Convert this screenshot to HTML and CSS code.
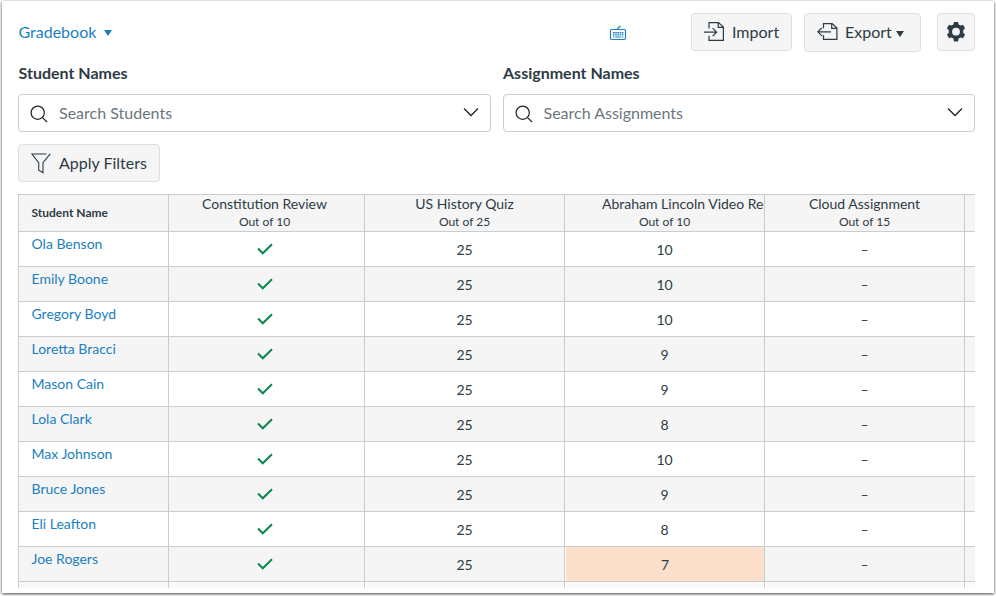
FILE: index.html
```html
<!DOCTYPE html>
<html lang="en">
<head>
  <meta charset="UTF-8">
  <title>Gradebook</title>
  <meta name="viewport" content="width=device-width, initial-scale=1.0">
  <link rel="stylesheet" href="styles.css">
</head>
<body>
  <div class="page">
    <header class="toolbar">
      <a class="gradebook-menu">Gradebook <span class="caret"></span></a>
      <svg class="keyboard" width="18" height="16" viewBox="0 0 18 16" fill="none" stroke="#1a7fc1">
        <rect x="1.500" y="4.500" width="15" height="10" rx="1.200" stroke-width="1.100"/>
        <path d="M8.800 4.500V3.200L11.500 1" stroke-width="1.200"/>
        <path d="M4 7.700h10.500M4 9.900h10.500" stroke-width="1.400" stroke-dasharray="1.600 .6"/>
        <path d="M4 12h1.500M6.300 12h5.500M12.800 12h1.500" stroke-width="1.200"/>
      </svg>
      <button class="btn import">
        <svg width="22" height="22" viewBox="0 0 22 22" fill="none" stroke="#2d3b45" stroke-width="1.2">
          <path d="M5 7.500V1.600h9.500L19.400 6v13.400H5v-4.600M14.200 1.600V6.400h5.200M0 11.200h12.300M8.600 7.200l4 4-4 4"/>
        </svg>
        <span>Import</span>
      </button>
      <button class="btn export">
        <svg width="22" height="20" viewBox="0 0 22 20" fill="none" stroke="#2d3b45" stroke-width="1.2">
          <path d="M6.500 6.200V1.600h8.700L19.900 6v11.400H6.500v-4.300M14.700 1.600V6.400h5.200M.9 9.800h13M4.900 5.800l-4 4 4 4"/>
        </svg>
        <span>Export</span> <span class="caret"></span>
      </button>
      <button class="btn settings">
        <svg width="20" height="20" viewBox="0 0 20 20" fill="#2d3b45">
          <path fill-rule="evenodd" d="M7.900 0h4.200l.5 2.500 1.900 1.100 2.500-.9 2.100 3.700-1.900 1.700v2.800l1.900 1.700-2.100 3.700-2.500-.9-1.900 1.100-.5 2.900H7.900l-.5-2.900-1.900-1.100-2.500.9L.9 12.600l1.900-1.700V8.100L.9 6.400 3 2.700l2.500.9 1.900-1.100zM10 5.800a3.900 3.900 0 1 0 0 7.800 3.900 3.900 0 0 0 0-7.800z"/>
        </svg>
      </button>
    </header>

    <div class="search">
      <div class="field">
        <label>Student Names</label>
        <div class="input">
          <svg width="18" height="18" viewBox="0 0 18 18" fill="none" stroke="#222" stroke-width="1.2">
            <circle cx="7.700" cy="7.700" r="6.600"/><path d="M12.300 12.300L17 17"/>
          </svg>
          <span>Search Students</span>
          <svg class="arrow" width="16" height="10" viewBox="0 0 16 10" fill="none" stroke="#222" stroke-width="1.3">
            <path d="M1 1.500l7 7 7-7"/>
          </svg>
        </div>
      </div>
      <div class="field">
        <label>Assignment Names</label>
        <div class="input">
          <svg width="18" height="18" viewBox="0 0 18 18" fill="none" stroke="#222" stroke-width="1.2">
            <circle cx="7.700" cy="7.700" r="6.600"/><path d="M12.300 12.300L17 17"/>
          </svg>
          <span>Search Assignments</span>
          <svg class="arrow" width="16" height="10" viewBox="0 0 16 10" fill="none" stroke="#222" stroke-width="1.3">
            <path d="M1 1.500l7 7 7-7"/>
          </svg>
        </div>
      </div>
    </div>

    <button class="btn filters">
      <svg width="20" height="21" viewBox="0 0 20 21" fill="none" stroke="#2d3b45" stroke-width="1.1">
        <path d="M15.500 1H.9l6.800 8.600v7.700l4.300 2.400V9.600L19.300.9"/>
      </svg>
      <span>Apply Filters</span>
    </button>

    <div class="grid">
      <table>
        <colgroup>
          <col class="col-name"><col class="col-first"><col class="col"><col class="col"><col class="col"><col class="col-rest">
        </colgroup>
        <thead>
          <tr>
            <th class="name">Student Name</th>
            <th class="first">Constitution Review<small>Out of 10</small></th>
            <th>US History Quiz<small>Out of 25</small></th>
            <th class="long"><div>Abraham Lincoln Video Re</div><small>Out of 10</small></th>
            <th>Cloud Assignment<small>Out of 15</small></th>
            <th></th>
          </tr>
        </thead>
        <tbody id="rows"></tbody>
      </table>
    </div>
  </div>

  <script>
  const students = [
    ["Ola Benson", 10],
    ["Emily Boone", 10],
    ["Gregory Boyd", 10],
    ["Loretta Bracci", 9],
    ["Mason Cain", 9],
    ["Lola Clark", 8],
    ["Max Johnson", 10],
    ["Bruce Jones", 9],
    ["Eli Leafton", 8],
    ["Joe Rogers", 7]
  ];
  const check = '<svg width="16" height="12" viewBox="0 0 16 12" fill="none" stroke="#0b874b" stroke-width="2"><path d="M1 5.500l4.800 4.800L15 1.200"/></svg>';
  const tbody = document.getElementById("rows");

  students.forEach(([name, score]) => {
    const tr = document.createElement("tr");
    const late = score === 7 ? ' class="late"' : "";
    tr.innerHTML = `<td class="name"><a>${name}</a></td><td class="first">${check}</td><td>25</td><td${late}>${score}</td><td>–</td><td></td>`;
    tbody.appendChild(tr);
  });

  // next row, cut off by the bottom of the grid
  const last = document.createElement("tr");
  last.className = "cut";
  last.innerHTML = "<td></td>".repeat(6);
  tbody.appendChild(last);
  </script>
</body>
</html>
```

FILE: styles.css
```css
* {
  box-sizing: border-box;
}
body {
  margin: 0;
  height: 596px;
  padding: 1px 2px 3px;
  overflow: hidden;
  background: #fff;
  font-family: Lato, sans-serif;
  font-size: 16px;
  color: #2d3b45;
}
.page {
  height: 592px;
  padding: 11px 19px 0 16px;
  background: #fff;
  box-shadow: 0 1px 3px rgba(0, 0, 0, 0.75);
}
svg {
  display: block;
  flex: none;
}
.toolbar {
  display: flex;
  align-items: center;
  height: 40px;
}
.gradebook-menu {
  display: flex;
  align-items: center;
  gap: 8px;
  padding: 0 0 2px 0.5px;
  color: #1a7fc1;
}
.caret {
  border: 4px solid transparent;
  border-top: 6px solid currentColor;
  border-bottom: 0;
  margin-top: 4px;
}
.keyboard {
  margin: 2px 64px 0 auto;
}
.btn {
  display: flex;
  align-items: center;
  height: 38px;
  padding: 0 12px;
  border: 1px solid #dcdfe1;
  border-radius: 4px;
  background: #f5f5f5;
  font: inherit;
  color: inherit;
  white-space: nowrap;
}
.btn span:not(.caret) {
  padding-bottom: 2px;
}
.import {
  width: 101px;
  gap: 6px;
}
.export {
  width: 117px;
  height: 39px;
  margin-left: 12px;
  gap: 6px;
}
.export .caret {
  border-width: 6px 4px 0;
  margin: 3px 0 0 -2px;
}
.settings {
  width: 38px;
  margin-left: 16px;
  padding: 0 8px;
}
.search {
  display: flex;
  gap: 12px;
  margin-top: 11px;
}
.field {
  flex: 1;
}
.field label {
  display: block;
  padding-left: 0.5px;
  line-height: 20px;
  font-weight: bold;
}
.input {
  display: flex;
  align-items: center;
  height: 38px;
  margin-top: 11px;
  padding: 0 11px;
  border: 1px solid #c7cdd1;
  border-radius: 4px;
  color: #6b7780;
}
.input span {
  margin-left: 11px;
  padding-bottom: 2px;
}
.input svg {
  margin-top: 2px;
}
.input .arrow {
  margin: -2px 0 0 auto;
}
.filters {
  width: 142px;
  margin-top: 12px;
  gap: 8px;
}
.grid {
  height: 394px;
  margin-top: 12px;
  overflow: hidden;
}
table {
  width: 957px;
  table-layout: fixed;
  border-collapse: separate;
  border-spacing: 0;
  border: solid #c7cdd1;
  border-width: 1px 0 0 1px;
  font-size: 14px;
}
.col-name {
  width: 150px;
}
.col-first {
  width: 196px;
}
.col {
  width: 200px;
}
.col-rest {
  width: 10px;
}
th, td {
  padding: 0;
  border: solid #c7cdd1;
  border-width: 0 1px 1px 0;
  text-align: center;
}
th {
  height: 37px;
  padding-bottom: 1px;
  background: #f5f5f5;
  font-weight: normal;
  line-height: 18px;
  white-space: nowrap;
  overflow: hidden;
}
th small {
  display: block;
  font-size: 12px;
  line-height: 17px;
}
th.name {
  font-size: 12px;
  font-weight: bold;
}
.first {
  padding-right: 4px;
}
.long div {
  padding-left: 37px;
  text-align: left;
}
td {
  height: 35px;
}
td svg {
  margin: 0 auto;
}
tbody tr:nth-child(even) {
  background: #f5f5f5;
}
tbody tr.cut {
  background: #fafafa;
}
.name {
  padding-left: 12.5px;
  text-align: left;
}
td.name {
  padding-bottom: 11px;
}
.name a {
  color: #1a7fc1;
}
td.late {
  background: #fde0cb;
  border-left: 1px solid #fff;
}
th:last-child, td:last-child {
  border-right: 0;
}
```
